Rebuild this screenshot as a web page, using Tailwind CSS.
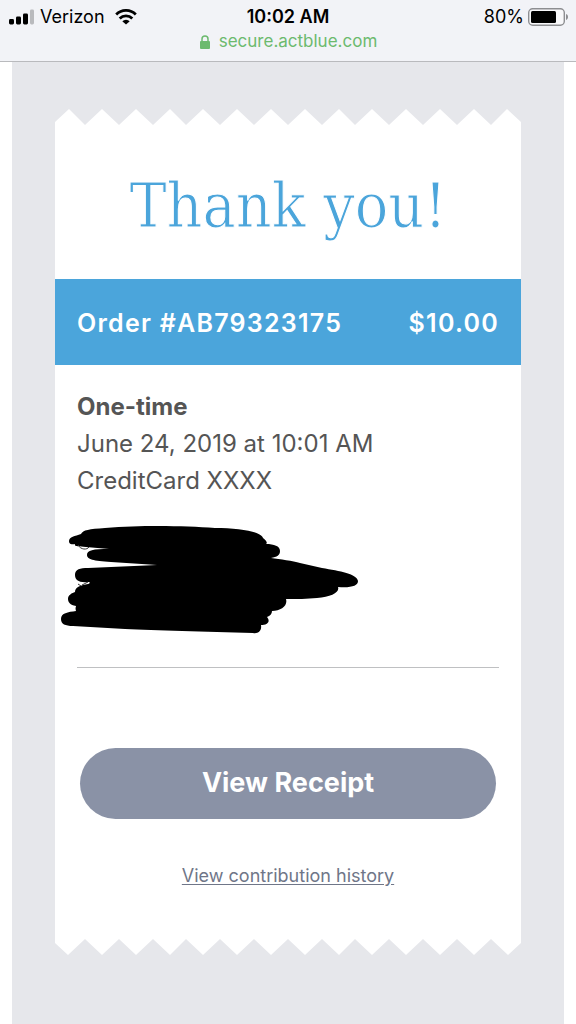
<!DOCTYPE html>
<html lang="en">
<head>
    <meta charset="UTF-8">
    <meta name="viewport" content="width=device-width, initial-scale=1.0">
    <title>Thank you! | ActBlue</title>
    <script src="https://cdn.jsdelivr.net/npm/@tailwindcss/browser@4"></script>
</head>
<body class="flex min-h-screen flex-col bg-white font-['Inter',sans-serif]">
    <!-- Status bar -->
    <header class="border-b border-[#b9babd] bg-[#f2f3f7] pt-[3px] pb-[7px] text-black">
        <div class="grid h-6 grid-cols-3 items-center px-2 text-lg">
            <div class="flex items-center gap-1.5">
                <svg class="h-4 w-[26px]" viewBox="0 0 26 16" aria-hidden="true">
                    <rect x="1" y="10" width="5" height="5.5" rx="1.4" />
                    <rect x="8" y="7.5" width="5" height="8" rx="1.4" />
                    <rect x="15" y="4.5" width="5" height="11" rx="1.4" />
                    <rect x="22" y="0.5" width="4" height="15" rx="1.4" fill="#b9babd" />
                </svg>
                <span>Verizon</span>
                <svg class="ml-1 h-4 w-[22px]" viewBox="0 0 22 16" fill="none" stroke="#000" stroke-width="2.8" aria-hidden="true">
                    <path d="M1.2 5.4a14 14 0 0 1 19.6 0" />
                    <path d="M4.7 9.4a9 9 0 0 1 12.6 0" />
                    <path d="M11 15.6l-3.7-3.4a5.3 5.3 0 0 1 7.4 0z" fill="#000" stroke="none" />
                </svg>
            </div>
            <div class="text-center font-semibold">10:02 AM</div>
            <div class="flex items-center justify-end gap-1">
                <span>80%</span>
                <svg class="h-[18px] w-10" viewBox="0 0 40 18" aria-hidden="true">
                    <rect x="0.7" y="0.7" width="35.6" height="16.6" rx="4" fill="#f8f8fa" stroke="#8d8e91" stroke-width="1.4" />
                    <rect x="3" y="3" width="25" height="12" rx="1.5" />
                    <path d="M38 6v6c1.4-.4 2-1.6 2-3s-.6-2.6-2-3z" fill="#8d8e91" />
                </svg>
            </div>
        </div>
        <div class="mt-[3px] flex h-6 items-center justify-center gap-2 text-[17px] text-[#6cba6e]">
            <svg class="h-3.5 w-3" viewBox="0 0 12 14" aria-hidden="true">
                <path d="M3 6.5V4a3 3 0 0 1 6 0v2.5" fill="none" stroke="#6cba6e" stroke-width="1.5" />
                <rect x="1" y="6" width="10" height="8" rx="1" fill="#6cba6e" />
            </svg>
            <span>secure.actblue.com</span>
        </div>
    </header>

    <main class="mx-3 flex-1 bg-[#e6e7eb] px-[43px] pt-[47px] pb-16">
        <!-- Receipt -->
        <svg class="block h-4 w-full" viewBox="0 0 466 16" preserveAspectRatio="none" fill="#fff" aria-hidden="true">
            <path d="M0 16V13L14 0 30 16 47 0 64 16 81 0 98 16 115 0 131 16 148 0 165 16 182 0 199 16 216 0 233 16 250 0 267 16 284 0 300 16 317 0 334 16 351 0 368 16 385 0 402 16 419 0 436 16 452 0 466 13V16z" />
        </svg>
        <div class="bg-white">
            <h1 class="pt-10 pb-8 text-center font-['Roboto_Slab','DejaVu_Serif_Condensed','DejaVu_Serif',serif] text-[62px] leading-[82px] font-light text-[#4ba5db] [-webkit-text-stroke:1px_white]">Thank you!</h1>

            <div class="flex items-center justify-between bg-[#4ba5db] px-[22px] pt-[25px] pb-[23px] text-[25px] leading-[38px] font-semibold tracking-wider text-white">
                <span>Order #AB79323175</span>
                <span>$10.00</span>
            </div>

            <div class="px-[22px] pt-[23px]">
                <div class="text-2xl leading-[37px] text-[#555]">
                    <p class="font-bold">One-time</p>
                    <p>June 24, 2019 at 10:01 AM</p>
                    <p>CreditCard XXXX</p>
                </div>
                <div class="-ml-[22px] pt-[26px]">
                    <svg class="block h-[112px] w-[320px]" viewBox="0 0 320 112" aria-hidden="true">
                        <path d="M14 16C14 12 20 11 26 9 28 5 34 4 50 3 90 0 130 1 160 3 185 3 207 7 208 13 211 15 213 18 211 19 219 19 225 21 225 26 225 30 222 32 216 33 225 34 238 36 245 38L267 43C285 46 302 49 303 56 303 61 296 63 283 62 285 67 276 72 262 73 252 74 242 74 231 74 233 81 226 86 217 86 217 89 215 91 212 92 216 97 212 100 206 100 207 106 203 109 198 108 150 107 100 105 70 104L18 101C10 101 6 99 6 94 6 88 13 87 21 86 20 83 21 82 21 81 15 80 13 77 13 74 13 70 17 68 20 67 20 62 26 60 33 59 36 58 35 57 33 57 24 58 20 55 20 50 20 44 25 43 33 43L102 40 56 37C38 36 32 34 32 30 32 25 38 24 54 24L31 22C23 21 19 22 20 19 15 20 14 18 14 16z" />
                        <path d="M23 20c3 5 9 5 11 2M23 59l3 2M27 60l6-3" fill="none" stroke="#333" />
                    </svg>
                </div>
                <hr class="mt-[30px] border-[#bfc0c2]">
            </div>

            <div class="flex flex-col px-[25px] pt-20 pb-[50px]">
                <button type="button" class="h-[71px] rounded-full bg-[#8a92a6] text-[27px] font-bold text-white">View Receipt</button>
                <a href="#" class="mt-11 self-center text-lg leading-[26px] text-[#6f7688] underline underline-offset-2">View contribution history</a>
            </div>
        </div>
        <svg class="block h-4 w-full" viewBox="0 0 466 16" preserveAspectRatio="none" fill="#fff" aria-hidden="true">
            <path d="M0 0V4L13 16 30 0 47 16 64 0 81 16 98 0 115 16 131 0 148 16 165 0 182 16 199 0 216 16 233 0 250 16 267 0 284 16 300 0 317 16 334 0 351 16 368 0 385 16 402 0 419 16 436 0 453 16 466 4V0z" />
        </svg>
    </main>
</body>
</html>
